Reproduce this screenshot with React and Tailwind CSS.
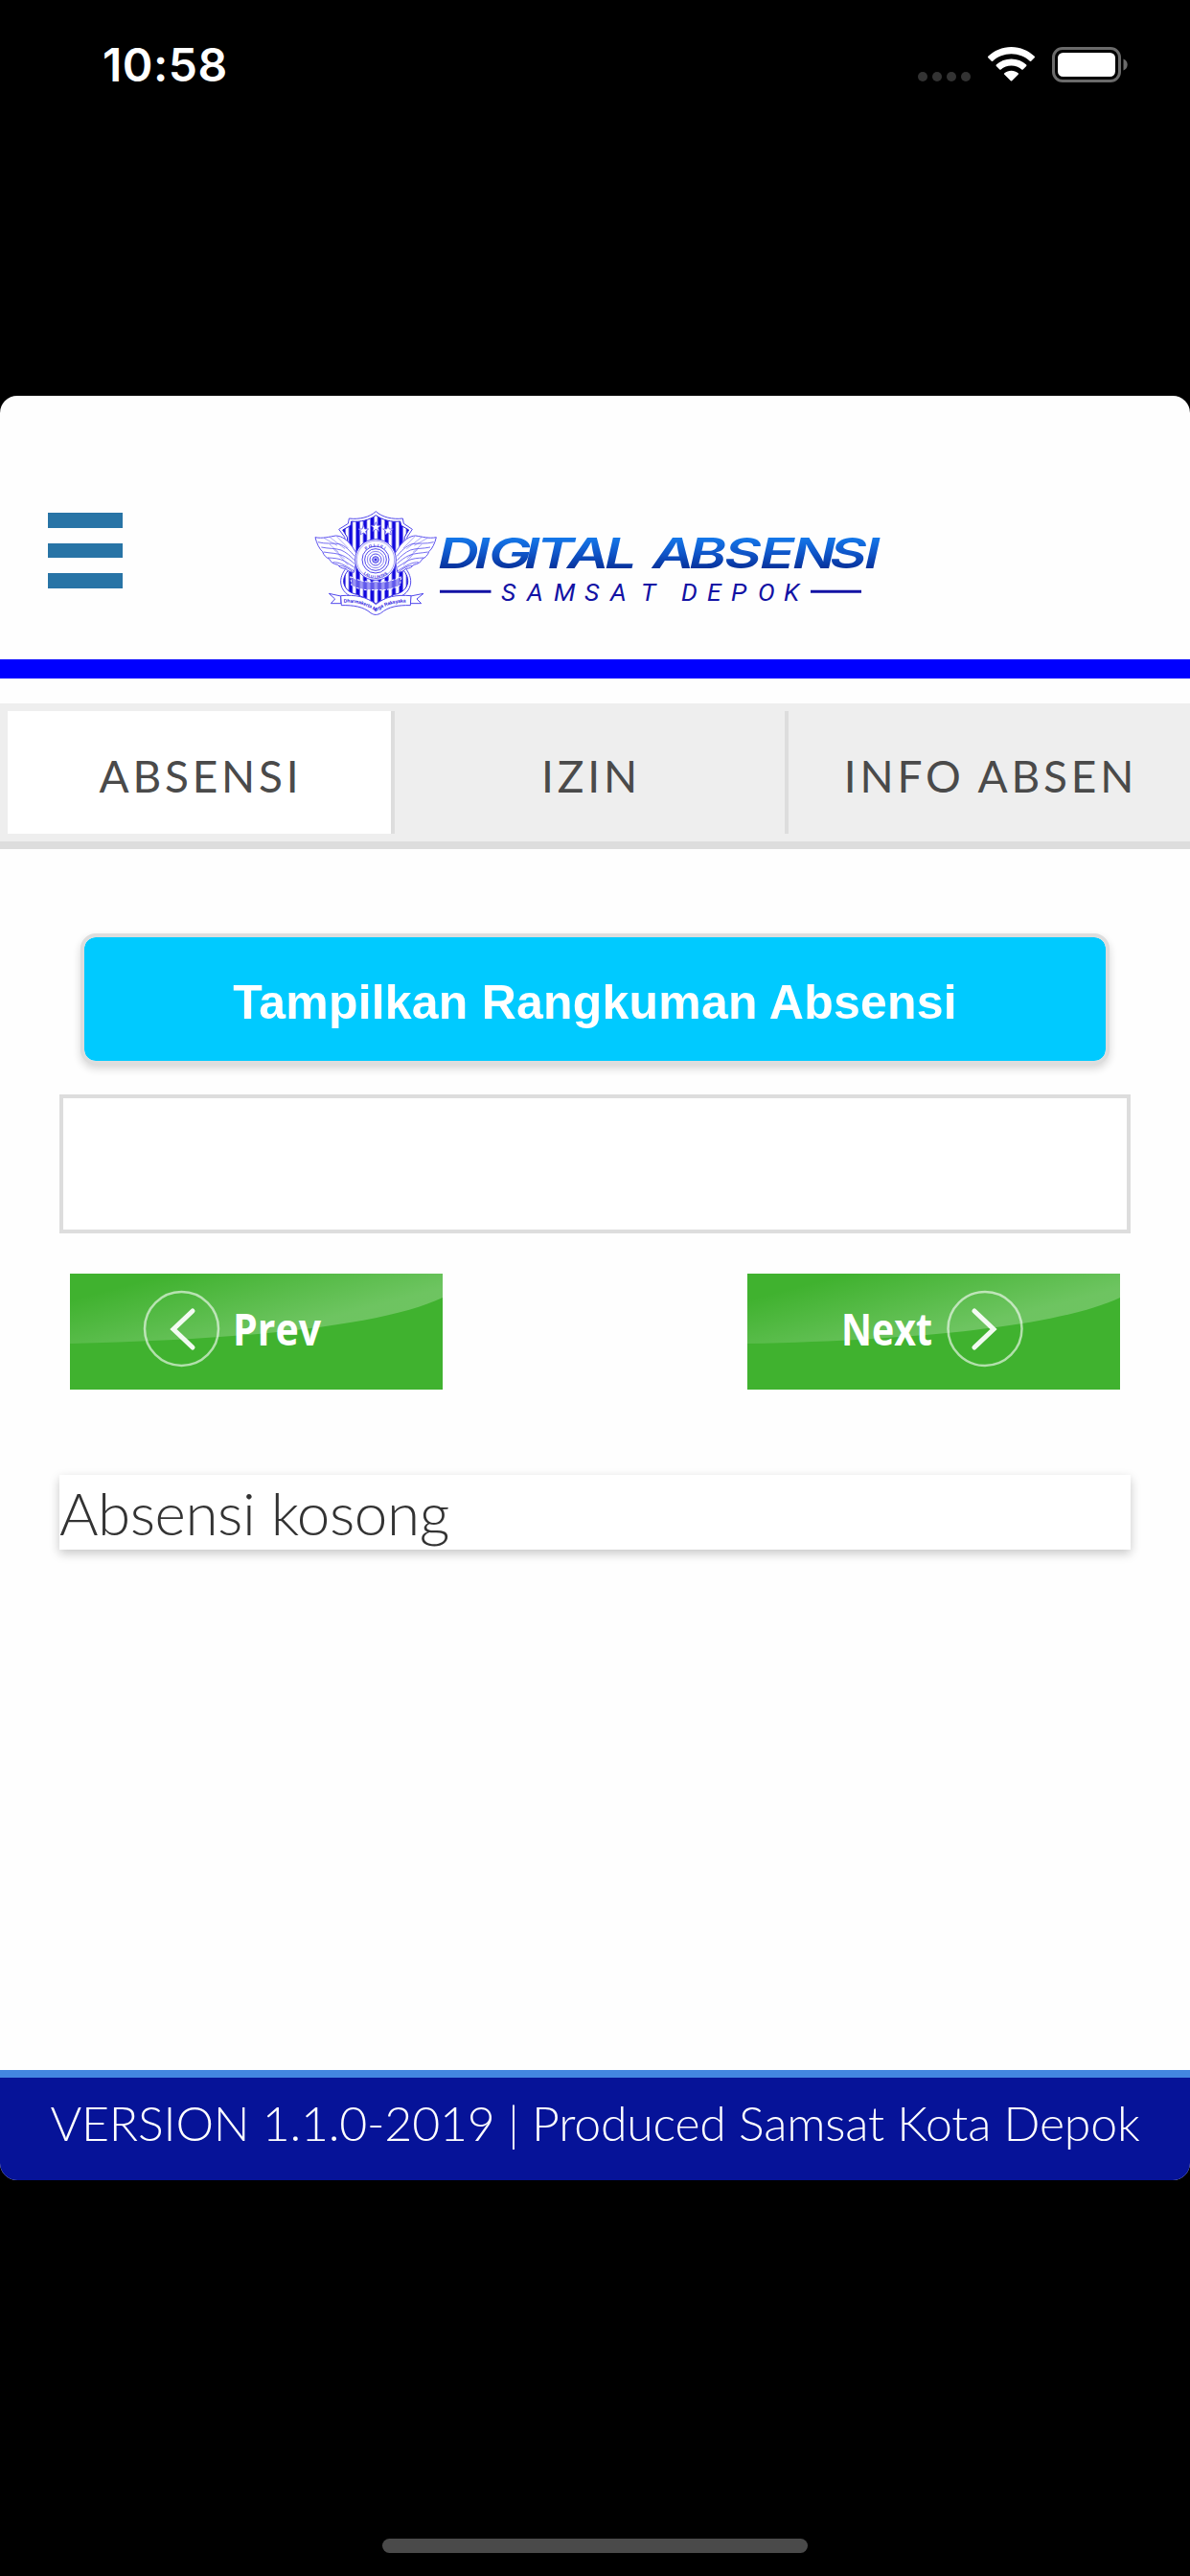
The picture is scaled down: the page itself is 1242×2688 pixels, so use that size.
import clsx from 'clsx'

const tabs = [
  { label: 'ABSENSI', active: true },
  { label: 'IZIN' },
  { label: 'INFO ABSEN' }
]

// glyph x positions of the logo title, drawn with a 1.35 horizontal stretch
const TITLE = [
  ['D', 457], ['I', 495], ['G', 510], ['I', 547], ['T', 560], ['A', 592], ['L', 631],
  ['A', 681], ['B', 719], ['S', 756], ['E', 793], ['N', 827], ['S', 866], ['I', 902]
]

const StatusBar = () => (
  <div className="flex h-[413px] items-start justify-between pt-[49px] pr-[65px] pl-[107px]">
    <span className="-mt-[1px] font-['Inter'] text-[48px] leading-[40px] font-semibold tracking-[0.5px] text-white">10:58</span>
    <div className="flex items-end">
      <div className="mr-[18px] mb-[1px] flex gap-[5px]">
        {[0, 1, 2, 3].map((dot) => (
          <span key={dot} className="size-[10px] rounded-full bg-[#333333]" />
        ))}
      </div>
      <svg className="mr-[18px] h-[37px] w-[49px]" viewBox="0 0 49 37" fill="#fff">
        <path d="M24.5 0C34 0 42.5 3.800 48.700 9.800C49.100 10.200 49.100 10.800 48.700 11.200L45.200 14.700C44.800 15.100 44.200 15.100 43.800 14.700C38.800 10.100 32 7.300 24.500 7.300S10.200 10.100 5.200 14.700C4.800 15.100 4.200 15.100 3.800 14.700L.3 11.200C-.1 10.800-.1 10.200.3 9.800C6.500 3.800 15 0 24.500 0Z" />
        <path d="M24.500 12.500C30.600 12.500 36 14.800 40.200 18.500C40.600 18.900 40.600 19.500 40.200 19.900L36.700 23.400C36.300 23.800 35.700 23.800 35.300 23.400C32.400 20.900 28.600 19.500 24.500 19.500S16.600 20.900 13.700 23.400C13.300 23.800 12.700 23.800 12.300 23.400L8.800 19.900C8.400 19.500 8.400 18.900 8.800 18.500C13 14.800 18.400 12.500 24.500 12.500Z" />
        <path d="M24.500 24.700C27.200 24.700 29.700 25.700 31.600 27.200C32.100 27.600 32.100 28.300 31.700 28.700L25.200 35.200C24.800 35.600 24.200 35.600 23.800 35.200L17.300 28.700C16.900 28.300 16.900 27.600 17.400 27.200C19.300 25.700 21.800 24.700 24.500 24.700Z" />
      </svg>
      <svg className="h-[37px] w-[79px]" viewBox="0 0 79 37">
        <rect x="1.500" y="1.500" width="69" height="34" rx="9.500" fill="none" stroke="#6b6b6b" strokeWidth="3" />
        <rect x="6" y="6" width="60" height="25" rx="5.500" fill="#fff" />
        <path d="M74.500 12.500C77 13.500 78.700 15.800 78.700 18.500S77 23.500 74.500 24.500Z" fill="#6b6b6b" />
      </svg>
    </div>
  </div>
)

const Wing = () => (
  <g fill="#fff" stroke="#5a50ee" strokeWidth="3" strokeLinejoin="round">
    <path d="M57 182C80 187 101 180 122 177C141 178 158 190 176 216L190 238L178 292C164 291 158 286 152 280C140 280 133 276 128 268C115 266 105 260 101 250C92 246 83 238 80 227C70 218 62 203 57 182Z" />
    <path d="M65 197C90 204 113 199 133 203C151 209 166 224 180 241M76 213C99 218 120 216 138 222C154 229 167 240 180 254M83 228C105 232 125 231 143 239C156 245 169 255 180 265M96 246C116 247 132 248 148 256C159 262 169 270 179 276M113 260C130 260 146 266 179 288M131 271C146 271 158 277 174 290" fill="none" strokeWidth="2.500" />
    <path d="M84 184L126 208M103 182L150 218M125 180L160 216M102 204L130 229M115 220L149 249M130 236L160 270" fill="none" strokeWidth="1.500" />
  </g>
)

const Badge = () => (
  <g transform="translate(310 500) scale(.33333)">
    <defs>
      <pattern id="bars" x="158" width="22.500" height="20" patternUnits="userSpaceOnUse">
        <rect width="22.500" height="20" fill="#fff" />
        <rect x="4" width="12" height="20" fill="#1208dd" />
      </pattern>
      <path id="ribbonArc" d="M146 386C190 384 218 395 247 414C276 395 304 384 350 386" />
      <path id="topArc" d="M203 238A48 48 0 0 1 289 238" />
      <path id="bottomArc" d="M192 272A57 57 0 0 0 300 272" />
    </defs>
    <path d="M247 101C228 119 195 127 163 123L160 139L131 157L149 181C151 203 156 218 162 232L160 272C147 285 136 302 137 324C139 348 157 366 184 372L247 400L309 372C337 366 354 348 356 324C357 302 346 285 333 272L331 232C338 218 343 203 345 181L361 157L334 139L331 123C299 127 266 119 247 101Z" fill="#fff" stroke="#5148eb" strokeWidth="3" />
    <path d="M247 113C227 128 199 135 170 132L168 145L143 159L157 181C158 204 163 222 171 238L168 278C154 290 145 305 146 323C149 342 164 357 188 361L247 389L305 361C330 357 344 342 347 323C348 305 340 290 325 278L323 238C331 222 336 204 337 181L350 159L326 145L323 132C295 135 267 128 247 113Z" fill="url(#bars)" stroke="#2a20df" strokeWidth="3" />
    <g fill="#fff" stroke="#6a62ee" strokeWidth="2.500">
      <path d="M247 134L251 145L263 145L254 152L257 163L247 157L237 163L240 152L231 145L243 145Z" />
      <path d="M208 145L212 156L224 156L215 163L218 174L208 168L198 174L201 163L192 156L204 156Z" />
      <path d="M285 145L289 156L301 156L292 163L295 174L285 168L275 174L278 163L269 156L281 156Z" />
    </g>
    <path d="M167 305C190 316 216 325 247 320C278 325 304 316 327 305L322 333C300 343 278 350 247 346C216 350 191 344 171 333Z" fill="#7972ef" fillOpacity=".75" stroke="#fff" strokeWidth="3" strokeDasharray="8 4" />
    <Wing />
    <g transform="translate(493 0) scale(-1 1)">
      <Wing />
    </g>
    <g fill="#fff" stroke="#5047eb">
      <circle cx="246" cy="252" r="64" strokeWidth="3" />
      <circle cx="246" cy="252" r="59" strokeWidth="1.500" />
      <circle cx="246" cy="252" r="42" strokeWidth="3" />
      <circle cx="246" cy="252" r="34" strokeWidth="3" />
      <circle cx="246" cy="252" r="26" strokeWidth="2" />
      <circle cx="246" cy="252" r="18" strokeWidth="3" />
      <circle cx="246" cy="252" r="10" strokeWidth="3" fill="#a9a5f5" />
      <circle cx="246" cy="252" r="3" fill="#1208dd" />
    </g>
    <g fill="#3a30e3" className="font-['Liberation_Sans'] font-bold">
      <text fontSize="13">
        <textPath href="#topArc" startOffset="50%" textAnchor="middle" letterSpacing="4">POLISI</textPath>
      </text>
      <text fontSize="13">
        <textPath href="#bottomArc" startOffset="50%" textAnchor="middle">LALU LINTAS</textPath>
      </text>
    </g>
    <g fill="#fff" stroke="#5047eb" strokeWidth="3" strokeLinejoin="round">
      <path d="M137 366L100 358L119 375L106 389L138 389Z" />
      <path d="M356 366L396 358L375 375L389 389L355 389Z" />
      <path d="M137 365C184 361 218 368 247 392C276 368 310 361 357 365L355 395C317 394 286 399 263 419C252 426 241 426 231 419C208 399 176 394 139 395Z" />
    </g>
    <text fontSize="15" fill="#2a20df" className="font-['Liberation_Sans'] font-bold">
      <textPath href="#ribbonArc" textLength="206">Dharmakerta Marga Raksyaka</textPath>
    </text>
  </g>
)

const Logo = () => (
  <svg className="h-[120px] w-[600px]" viewBox="322 528 600 120">
    <defs>
      <linearGradient id="title" gradientUnits="userSpaceOnUse" x1="0" y1="561" x2="0" y2="594">
        <stop offset="0" stopColor="#1478ea" />
        <stop offset=".5" stopColor="#0f55c8" />
        <stop offset="1" stopColor="#062f98" />
      </linearGradient>
    </defs>
    <Badge />
    <g transform="scale(1.35 1)">
      <text
        x={TITLE.map(([, x]) => x / 1.35).join(' ')}
        y="593.500"
        fontSize="44"
        fill="url(#title)"
        className="font-['Inter'] font-semibold italic"
      >
        {TITLE.map(([letter]) => letter).join('')}
      </text>
    </g>
    <path d="M459 617.300H512.500M846 617.300H899" stroke="#1212a4" strokeWidth="3" />
    <text
      x="523 550 578 610 637 669 711 738 763 791 818"
      y="627"
      fontSize="26.500"
      fill="#1212a4"
      className="font-['Roboto'] italic"
    >
      SAMSATDEPOK
    </text>
  </svg>
)

const Header = () => (
  <header className="flex h-[295px] items-start border-b-[20px] border-[#0000ff] pl-[50px]">
    <div className="mt-[122px] flex w-[78px] flex-col gap-4">
      <span className="h-[15.500px] bg-[#2874a6]" />
      <span className="h-[15.500px] bg-[#2874a6]" />
      <span className="h-[15.500px] bg-[#2874a6]" />
    </div>
    <div className="mt-[115px] ml-[194px]">
      <Logo />
    </div>
  </header>
)

const Tab = ({ label, active, last }) => (
  <div
    className={clsx(
      "flex items-center justify-center pt-[7px] pl-[3px] font-['Lato'] text-[46px] tracking-[3.8px] text-[#4a4a4a]",
      active && 'bg-white',
      !last && 'border-r-4 border-[#dddddd]'
    )}
  >
    {label}
  </div>
)

const NavButton = ({ id, label, prev }) => (
  <svg className="h-[121px] w-[389px]" viewBox="0 0 389 121">
    <defs>
      <linearGradient id={id} gradientUnits="userSpaceOnUse" x1="150" y1="-12" x2="172" y2="72">
        <stop offset="0" stopColor="#fff" stopOpacity="0" />
        <stop offset="1" stopColor="#fff" stopOpacity=".24" />
      </linearGradient>
    </defs>
    <rect width="389" height="121" fill="#40b22f" />
    <path d="M0 0H389V25C330 53 190 69 0 73Z" fill={`url(#${id})`} />
    <circle cx={prev ? 116.500 : 248} cy="57.500" r="38.500" fill="none" stroke="#fff" strokeOpacity=".6" strokeWidth="2.500" />
    <path
      d={prev ? 'M128 39L108 58L128 77' : 'M237 39L257 58L237 77'}
      fill="none"
      stroke="#fff"
      strokeOpacity=".93"
      strokeWidth="5"
      strokeLinecap="round"
    />
    <text
      x={prev ? 170 : 98}
      y="75"
      fontSize="46"
      textLength={prev ? 92 : 95}
      lengthAdjust="spacingAndGlyphs"
      fill="#fff"
      className="font-['Open_Sans'] font-bold"
    >
      {label}
    </text>
  </svg>
)

export default function App() {
  return (
    <div className="flex h-[2688px] w-[1242px] flex-col bg-black">
      <StatusBar />

      <main className="flex h-[1862px] flex-col overflow-hidden rounded-[18px] bg-[#fefefe]">
        <Header />

        {/* Tabs */}
        <nav className="mt-[26px] grid h-[152px] grid-cols-[404px_411px_1fr] border-b-8 border-[#dddddd] bg-[#eeeeee] pt-2 pb-2 pl-2">
          {tabs.map((tab, idx) => (
            <Tab key={tab.label} {...tab} last={idx === tabs.length - 1} />
          ))}
        </nav>

        {/* Summary and date picker */}
        <section className="flex flex-col px-[62px] pt-[88px]">
          <button className="mx-[22px] h-[137px] rounded-[16px] border-4 border-[#dddddd] bg-[#00caff] bg-clip-padding pt-[7px] font-['Liberation_Sans'] text-[50px] font-bold tracking-[0.2px] text-white shadow-[0_4px_8px_rgba(0,0,0,0.16)]">
            Tampilkan Rangkuman Absensi
          </button>
          <div className="mt-[31px] h-[145px] border-4 border-[#dddddd] bg-white" />
          <div className="mt-[42px] flex justify-between pr-[11px] pl-[11px]">
            <NavButton id="glossPrev" label="Prev" prev />
            <NavButton id="glossNext" label="Next" />
          </div>
          <div className="mt-[89px] h-[78px] bg-white font-['Lato'] text-[62px] leading-[78px] font-light tracking-[-0.45px] text-[#333333] shadow-[0_4px_10px_rgba(0,0,0,0.22)]">
            Absensi kosong
          </div>
        </section>

        <footer className="mt-auto h-[115px] border-t-8 border-[#4386e0] bg-[#061398] text-center font-['Lato'] text-[50px] leading-[94px] font-light tracking-[-0.2px] text-white">
          VERSION 1.1.0-2019 | Produced Samsat Kota Depok
        </footer>
      </main>

      {/* Home indicator */}
      <div className="mx-auto mt-auto mb-[24px] h-[15px] w-[444px] rounded-full bg-[#4a4a4a]" />
    </div>
  )
}
